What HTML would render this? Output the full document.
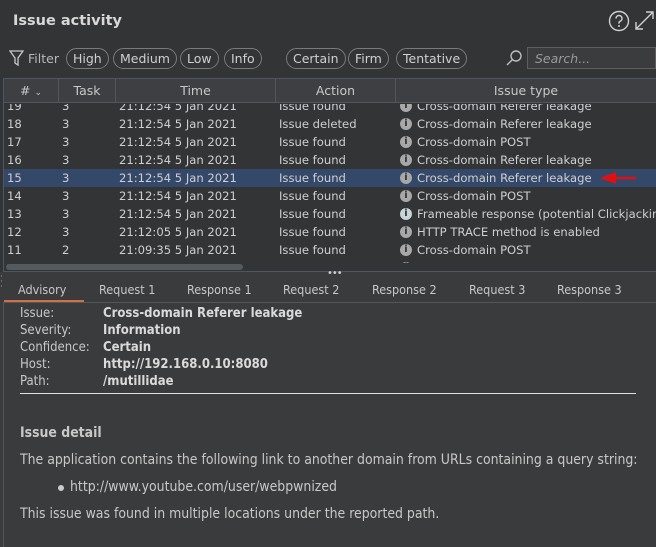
<!DOCTYPE html>
<html><head><meta charset="utf-8">
<style>
*{margin:0;padding:0;box-sizing:border-box}
body{width:656px;height:547px;overflow:hidden;background:#3a3b3d;font-family:"DejaVu Sans","Liberation Sans",sans-serif;color:#cfcfcf;position:relative}
.abs{position:absolute;white-space:nowrap}
.top{position:absolute;left:0;top:0;width:656px;height:272px;background:#323436}
.title{left:13px;top:13px;font-size:14.5px;font-weight:bold;color:#d8d8d8}
.pill{position:absolute;top:48px;height:21px;border:1px solid #7a7a7a;border-radius:11px;font-size:12.5px;line-height:19px;padding:0 6px;color:#d0d0d0;white-space:nowrap}
.search{position:absolute;left:527px;top:47px;width:129px;height:22px;border:1px solid #5e5e5e;background:#3a3c3e;font-style:italic;font-size:12.5px;color:#9a9a9a;padding:3px 7px}
.tbl{position:absolute;left:3px;top:78px;width:653px;height:194px;border-left:1px solid #4c5766;border-top:1px solid #4c5766;border-bottom:1px solid #4c5766}
.hdr{position:absolute;left:4px;top:79px;width:652px;height:24px;background:#3d3f42;border-bottom:1px solid #555}
.hc{position:absolute;top:79px;height:24px;line-height:24px;font-size:12.5px;color:#c8c8c8;text-align:center;border-right:1px solid #555}
.row{position:absolute;left:0;width:652px;height:18px;font-size:11.6px;line-height:18px;color:#cfcfcf;white-space:nowrap}
.row span{position:absolute;top:0;white-space:nowrap}
.sel{background:#34486a}
.ic{display:inline-block;width:12px;height:12px;border-radius:6px;background:#a8a8a8;color:#323436;font-size:10px;line-height:12px;text-align:center;font-weight:bold;top:3px!important}
.tab{position:absolute;top:282px;font-size:12.5px;color:#c8c8c8;font-family:"DejaVu Sans Condensed","Liberation Sans Narrow","DejaVu Sans",sans-serif}
.lbl{position:absolute;left:20px;font-size:13px;color:#c8c8c8;font-family:"DejaVu Sans Condensed","DejaVu Sans",sans-serif}
.val{position:absolute;left:103px;font-size:13px;color:#dadada;font-weight:bold;font-family:"DejaVu Sans Condensed","DejaVu Sans",sans-serif}
.txt{position:absolute;left:20px;font-size:13.9px;color:#c8c8c8;font-family:"DejaVu Sans Condensed","Liberation Sans Narrow","Liberation Sans",sans-serif;white-space:nowrap}
</style></head><body>
<div class="top"></div>
<div class="abs title">Issue activity</div>
<svg class="abs" style="left:608px;top:10px" width="22" height="22" viewBox="0 0 22 22"><circle cx="11" cy="11" r="9.5" fill="none" stroke="#d0d0d0" stroke-width="1.4"/><path d="M8 8.5a3 3 0 1 1 4 2.8c-.8.4-1 .9-1 1.7v.6" fill="none" stroke="#d0d0d0" stroke-width="1.5"/><circle cx="11" cy="16" r="1" fill="#d0d0d0"/></svg>
<svg class="abs" style="left:634px;top:10px" width="21" height="21" viewBox="0 0 21 21" fill="none" stroke="#d0d0d0" stroke-width="1.4"><path d="M2 19L19 2M12 2h7v7M2 12v7h7"/></svg>
<svg class="abs" style="left:9px;top:50px" width="15" height="17" viewBox="0 0 15 17" fill="none" stroke="#c8c8c8" stroke-width="1.3"><path d="M1 1h13L9 8v7l-3-2V8z"/></svg>
<div class="abs" style="left:28px;top:51px;font-size:12.5px;color:#b8b8b8">Filter</div>
<div class="pill" style="left:66px">High</div>
<div class="pill" style="left:113px">Medium</div>
<div class="pill" style="left:180px">Low</div>
<div class="pill" style="left:224px">Info</div>
<div class="pill" style="left:286px">Certain</div>
<div class="pill" style="left:348px">Firm</div>
<div class="pill" style="left:396px">Tentative</div>
<svg class="abs" style="left:505px;top:49px" width="18" height="18" viewBox="0 0 18 18" fill="none" stroke="#bdbdbd" stroke-width="1.4"><circle cx="11" cy="7" r="5"/><path d="M7.5 10.5L2 16"/></svg>
<div class="search">Search...</div>
<div class="tbl"></div>
<div class="hdr"></div>
<div class="hc" style="left:4px;width:55px">#&nbsp;<span style="font-size:9px">&#8964;</span></div>
<div class="hc" style="left:59px;width:57px">Task</div>
<div class="hc" style="left:116px;width:160px">Time</div>
<div class="hc" style="left:276px;width:120px">Action</div>
<div class="hc" style="left:396px;width:260px;border:none">Issue type</div>
<div style="position:absolute;left:4px;top:104px;width:652px;height:159px;overflow:hidden">
<div class="row" style="top:-7px"><span style="left:3px">19</span><span style="left:58px">3</span><span style="left:115px">21:12:54 5 Jan 2021</span><span style="left:275px">Issue found</span><span class="ic" style="left:396px">i</span><span style="left:413px">Cross-domain Referer leakage</span></div>
<div class="row" style="top:11px"><span style="left:3px">18</span><span style="left:58px">3</span><span style="left:115px">21:12:54 5 Jan 2021</span><span style="left:275px">Issue deleted</span><span class="ic" style="left:396px">i</span><span style="left:413px">Cross-domain Referer leakage</span></div>
<div class="row" style="top:29px"><span style="left:3px">17</span><span style="left:58px">3</span><span style="left:115px">21:12:54 5 Jan 2021</span><span style="left:275px">Issue found</span><span class="ic" style="left:396px">i</span><span style="left:413px">Cross-domain POST</span></div>
<div class="row" style="top:47px"><span style="left:3px">16</span><span style="left:58px">3</span><span style="left:115px">21:12:54 5 Jan 2021</span><span style="left:275px">Issue found</span><span class="ic" style="left:396px">i</span><span style="left:413px">Cross-domain Referer leakage</span></div>
<div class="row sel" style="top:65px"><span style="left:3px">15</span><span style="left:58px">3</span><span style="left:115px">21:12:54 5 Jan 2021</span><span style="left:275px">Issue found</span><span class="ic" style="left:396px">i</span><span style="left:413px">Cross-domain Referer leakage</span>
<svg style="position:absolute;left:596px;top:3px" width="40" height="12" viewBox="0 0 40 12"><path d="M0 6L16 0V12z" fill="#e01010"/><path d="M14 6h22" stroke="#e01010" stroke-width="2.5"/></svg></div>
<div class="row" style="top:83px"><span style="left:3px">14</span><span style="left:58px">3</span><span style="left:115px">21:12:54 5 Jan 2021</span><span style="left:275px">Issue found</span><span class="ic" style="left:396px">i</span><span style="left:413px">Cross-domain POST</span></div>
<div class="row" style="top:101px"><span style="left:3px">13</span><span style="left:58px">3</span><span style="left:115px">21:12:54 5 Jan 2021</span><span style="left:275px">Issue found</span><span class="ic" style="left:396px;background:#c8d4d8">i</span><span style="left:413px">Frameable response (potential Clickjacking)</span></div>
<div class="row" style="top:119px"><span style="left:3px">12</span><span style="left:58px">3</span><span style="left:115px">21:12:05 5 Jan 2021</span><span style="left:275px">Issue found</span><span class="ic" style="left:396px">i</span><span style="left:413px">HTTP TRACE method is enabled</span></div>
<div class="row" style="top:137px"><span style="left:3px">11</span><span style="left:58px">2</span><span style="left:115px">21:09:35 5 Jan 2021</span><span style="left:275px">Issue found</span><span class="ic" style="left:396px">i</span><span style="left:413px">Cross-domain POST</span></div>
<div class="row" style="top:155px"><span class="ic" style="left:396px">i</span></div>
</div>
<div style="position:absolute;left:6px;top:264px;width:237px;height:6px;border-radius:3px;background:#555a5c"></div>
<div class="abs" style="left:327px;top:268px;font-size:10px;color:#ccc;letter-spacing:-1px">•••</div>
<div class="abs" style="left:0;top:275px;font-size:9px;color:#999;line-height:5px">·<br>·<br>·</div>
<div class="tab" style="left:18px">Advisory</div>
<div class="tab" style="left:99px">Request 1</div>
<div class="tab" style="left:187px">Response 1</div>
<div class="tab" style="left:283px">Request 2</div>
<div class="tab" style="left:372px">Response 2</div>
<div class="tab" style="left:469px">Request 3</div>
<div class="tab" style="left:557px">Response 3</div>
<div style="position:absolute;left:4px;top:300px;width:80px;height:2px;background:#d0704a"></div>
<div style="position:absolute;left:4px;top:302px;width:652px;height:1px;background:#555"></div>
<div style="position:absolute;left:3px;top:302px;width:1px;height:245px;background:#555"></div>
<div class="lbl" style="top:306px">Issue:</div><div class="val" style="top:306px">Cross-domain Referer leakage</div>
<div class="lbl" style="top:323px">Severity:</div><div class="val" style="top:323px">Information</div>
<div class="lbl" style="top:340px">Confidence:</div><div class="val" style="top:340px">Certain</div>
<div class="lbl" style="top:357px">Host:</div><div class="val" style="top:357px">http://192.168.0.10:8080</div>
<div class="lbl" style="top:374px">Path:</div><div class="val" style="top:374px">/mutillidae</div>
<div style="position:absolute;left:20px;top:393px;width:616px;height:1px;background:#e0e0e0"></div>
<div class="txt" style="top:425px;font-weight:bold">Issue detail</div>
<div class="txt" style="top:452px">The application contains the following link to another domain from URLs containing a query string:</div>
<div style="position:absolute;left:58px;top:485px;width:6px;height:6px;border-radius:3px;background:#ccc"></div>
<div class="txt" style="top:479px;left:70px">http://www.youtube.com/user/webpwnized</div>
<div class="txt" style="top:506px">This issue was found in multiple locations under the reported path.</div>
</body></html>
